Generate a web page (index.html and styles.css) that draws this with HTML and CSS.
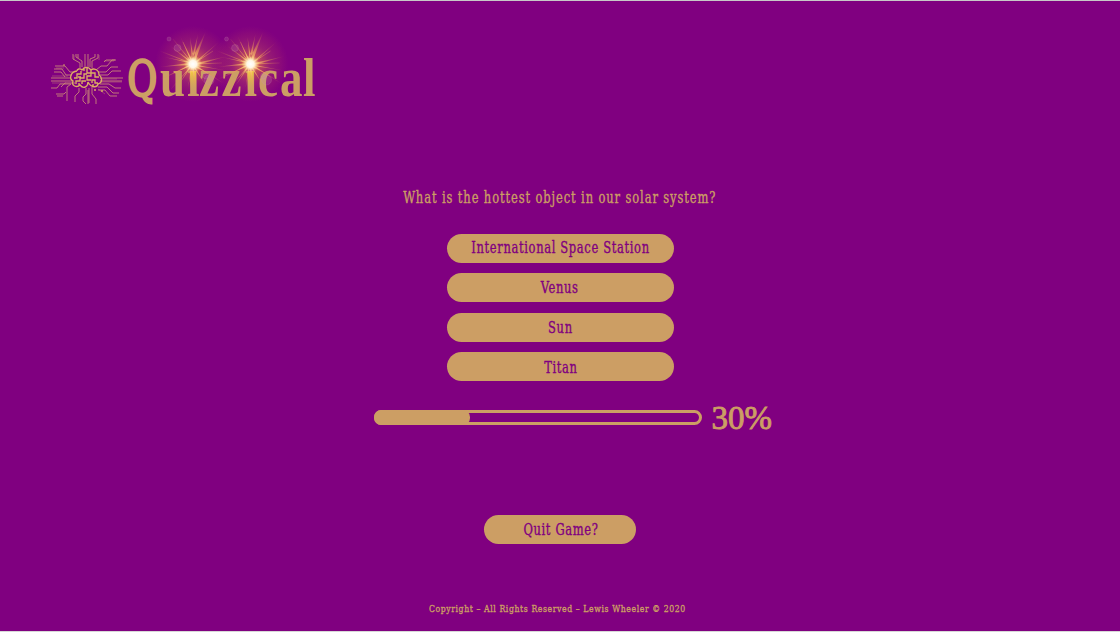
FILE: index.html
```html
<!DOCTYPE html>
<html lang="en">
<head>
<meta charset="utf-8">
<title>Quizzical</title>
<link rel="stylesheet" href="styles.css">
</head>
<body>
<header class="header">
<svg class="logo" viewBox="40 20 290 95" role="img" aria-label="Quizzical">
  <defs>
    <radialGradient id="halo">
      <stop offset="0" stop-color="#ffb44a" stop-opacity=".95"/>
      <stop offset=".25" stop-color="#e87945" stop-opacity=".6"/>
      <stop offset=".5" stop-color="#bd4960" stop-opacity=".4"/>
      <stop offset=".8" stop-color="#a82868" stop-opacity=".25"/>
      <stop offset="1" stop-color="#a02070" stop-opacity="0"/>
    </radialGradient>
    <radialGradient id="core">
      <stop offset="0" stop-color="#fff"/>
      <stop offset=".4" stop-color="#fff6e6"/>
      <stop offset="1" stop-color="#ffc66a" stop-opacity="0"/>
    </radialGradient>
    <radialGradient id="ray" gradientUnits="userSpaceOnUse" cx="0" cy="0" r="36">
      <stop offset="0" stop-color="#ffe3a0"/>
      <stop offset=".4" stop-color="#f2a458" stop-opacity=".6"/>
      <stop offset="1" stop-color="#e07855" stop-opacity="0"/>
    </radialGradient>
    <linearGradient id="stem" x1="0" y1="0" x2="0" y2="1">
      <stop offset="0" stop-color="#f4cb3e"/>
      <stop offset="1" stop-color="#cc9e64" stop-opacity="0"/>
    </linearGradient>
    <g id="flare">
      <path fill="url(#ray)" d="M-2-3 13-33 2-2 27-23 3-1 35-8 4 1 36 7 3 2 25 15 2 3 12 20 1 4 3 26-1 4-5 24-2 3-15 22-3 2-27 13-4 1-34 3-4-1-29-7-3-2-23-18-2-3-13-28-1-4-3-27 1-4 5-30Z"/>
      <path fill="none" stroke="url(#ray)" stroke-width=".8" d="M0 0-20-25M0 0-10-22M0 0 20-13M0 0 29-1M0 0 30 19M0 0-34 16M0 0-33-13M0 0-22 25"/>
      <circle r="9" fill="url(#core)"/>
      <g fill="#c788b8" fill-opacity=".2" stroke="#d193ac" stroke-opacity=".18">
        <circle cx="-15.500" cy="-16" r="3.500"/>
        <circle cx="-24" cy="-25" r="2"/>
        <circle cx="16" cy="16" r="5"/>
        <circle cx="13" cy="12" r="3"/>
      </g>
    </g>
  </defs>
  <g class="circuit">
    <path class="traces" d="M72 75H66L62 69H54M71 78H51M72 81H51M71 84H60L57 88H51M74 72H70L65 66H55M54 72H61L65 77M61 87L65 83H75M56 94H64L66 92M57 96H63M67 101V87L71 84M79 88V92L75 96V102M82 67V61L76 57V54M80 68V63L73 59V54M85 68V54M88 68V54M90 67V59L95 57V54M92 68V61L98 58V54M78 54V58M96 70 101 66H107L112 60H116M98 72H106L111 67H118M99 75H108L112 71H121M100 78H123M100 81H122M100 84H109L115 88H121M98 87H107L113 93H119M98 90H105L110 96H117M89 88V103M86 88V94L83 97V101L86 104M92 87V94L96 99V104M88 90V104M104 62 106 60H115"/>
    <path class="traces thin" d="M52 76H68M52 83H66M56 68H64M74 55V60M99 55V60M101 79H117M101 82H122M98 89 105 94M104 61H114"/>
    <path class="brain" d="M77 71C70 72 69 79 73 81C71 86 77 88 80 85C84 90 88 86 88 82C91 88 97 88 98 84C104 82 101 76 99 75C99 69 93 68 91 70C88 66 84 67 82 70C80 68 77 69 77 71M74 78H77V74H81V71M76 84V81H80V78H84V74H87M82 84V81H86M87 68V73H91V76H87V80H91M91 70V73H95V77H99M92 83V80H95V83H98M93 86V84M79 86V83M84 68V71M78 77H81"/>
    <g class="nodes"><circle cx="64" cy="65" r=".8"/><circle cx="95" cy="90" r="1"/><circle cx="102" cy="91" r="1"/></g>
  </g>
  <circle cx="193" cy="64" r="38" fill="url(#halo)"/>
  <circle cx="250.500" cy="64" r="38" fill="url(#halo)"/>
  <text class="wordmark" transform="scale(.82 1)" y="96.500" x="155.500 195.100 228 242.700 270.100 298.200 314.600 341.500 369.500"><tspan class="initial">Q</tspan>uizzical</text>
  <rect x="190" y="71" width="6" height="24" fill="url(#stem)"/>
  <rect x="247.500" y="71" width="6" height="24" fill="url(#stem)"/>
  <use href="#flare" x="193" y="64"/>
  <use href="#flare" x="250.500" y="64"/>
</svg>
</header>
<main class="game">
  <h1 class="question"><span class="label">What is the hottest object in our solar system?</span></h1>
  <div class="answers">
    <button class="button"><span class="label">International Space Station</span></button>
    <button class="button"><span class="label">Venus</span></button>
    <button class="button low"><span class="label">Sun</span></button>
    <button class="button low"><span class="label">Titan</span></button>
  </div>
  <div class="progress">
    <div class="track"><div class="fill" style="width: 30%"></div></div>
    <div class="percent">30%</div>
  </div>
  <button class="button low quit"><span class="label">Quit Game?</span></button>
</main>
<footer class="footer"><span class="label">Copyright – All Rights Reserved – Lewis Wheeler © 2020</span></footer>
</body>
</html>
```
FILE: styles.css
```css
* { box-sizing: border-box; }

body {
  margin: 0;
  height: 632px;
  overflow: hidden;
  display: flex;
  flex-direction: column;
  border-top: 1px solid #c8c8c8;
  border-bottom: 1px solid #d8d8d8;
  background: #800080;
  color: #cc9e64;
  font-family: "DejaVu Serif Condensed", "DejaVu Serif", serif;
  font-stretch: condensed;
}

.header { padding: 19px 0 0 40px; height: 168px; }
.logo { display: block; width: 290px; height: 95px; overflow: visible; }
.wordmark {
  font-family: "Liberation Serif", serif;
  font-size: 55px;
  font-weight: 700;
  fill: #cc9e64;
}
.initial {
  font-family: "DejaVu Serif Condensed", "DejaVu Serif", serif;
  font-size: 49px;
  font-weight: 400;
  stroke: #cc9e64;
  stroke-width: 2.5;
}
.traces { fill: none; stroke: #cc8b76; stroke-width: 1; opacity: .85; }
.thin { stroke-width: .5; }
.brain { fill: none; stroke: #dcae62; stroke-width: 1.35; }
.nodes { fill: #d9a765; }

.game { display: flex; flex-direction: column; align-items: center; }

.label {
  display: inline-block;
  white-space: nowrap;
  transform: scaleX(.8);
  -webkit-text-stroke: .35px currentColor;
}

.question {
  margin: 17px 0 0;
  height: 23px;
  font-size: 16px;
  line-height: 23px;
  font-weight: 400;
  letter-spacing: 1.1px;
}

.answers {
  margin-top: 24.600px;
  display: flex;
  flex-direction: column;
  gap: 10.600px;
}

.button {
  width: 227px;
  height: 29px;
  padding: 0 0 1px;
  display: flex;
  align-items: center;
  justify-content: center;
  border: 0;
  border-radius: 15px;
  background: #cc9e64;
  color: #800080;
  font: inherit;
  font-size: 16px;
  letter-spacing: .8px;
}

.button.low { padding: 1px 0 0 1px; }

.progress {
  margin: 19.200px 0 0 25px;
  height: 34px;
  display: flex;
  align-items: center;
  gap: 10px;
}

.track {
  width: 328px;
  height: 15px;
  border: 3px solid #cc9e64;
  border-radius: 8px;
}

.fill {
  height: 15px;
  margin: -3px 0 0 -3px;
  border-radius: 7px;
  background: #cc9e64;
}

.percent {
  width: 60px;
  font-family: "Liberation Serif", serif;
  font-size: 33px;
  line-height: 34px;
  -webkit-text-stroke: .9px currentColor;
}

.button.quit { width: 152px; margin-top: 80.400px; }

.footer {
  margin-top: 57px;
  padding-right: 6px;
  text-align: center;
  font-size: 10px;
  line-height: 15px;
  letter-spacing: .7px;
}

.footer .label { transform: scaleX(.86); }
```
